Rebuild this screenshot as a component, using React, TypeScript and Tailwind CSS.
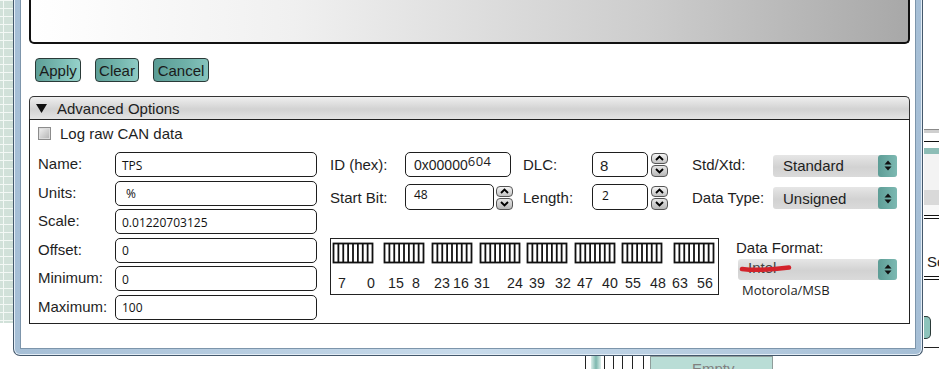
import React from "react";

function Spinner() {
  return (
    <div className="flex flex-col w-[17px] h-[24px] gap-px">
      <div className="flex-1 rounded-[4px] border border-[#555] bg-[linear-gradient(#f4f4f4,#c4c4c4)] flex items-center justify-center">
        <svg width="9" height="6" viewBox="0 0 9 6">
          <path d="M1 5 L4.5 1.5 L8 5" stroke="#000" strokeWidth="1.9" fill="none" />
        </svg>
      </div>
      <div className="flex-1 rounded-[4px] border border-[#555] bg-[linear-gradient(#e6e6e6,#b8b8b8)] flex items-center justify-center">
        <svg width="9" height="6" viewBox="0 0 9 6">
          <path d="M1 1 L4.5 4.5 L8 1" stroke="#000" strokeWidth="1.9" fill="none" />
        </svg>
      </div>
    </div>
  );
}

function SortArrows() {
  return (
    <svg width="8" height="11" viewBox="0 0 8 11">
      <polygon points="0.5,4.5 4,0.5 7.5,4.5" fill="#111" />
      <polygon points="0.5,6.5 4,10.5 7.5,6.5" fill="#111" />
    </svg>
  );
}

function Select({ value }: { value: string }) {
  return (
    <div className="flex w-[124px] h-[22px] rounded-[3px] bg-[linear-gradient(#e6e6e6,#d2d2d2_55%,#dadada)] items-center">
      <span className="flex-1 pl-[10px] text-[15px] leading-none">{value}</span>
      <div className="w-[19px] h-full rounded-[3px] bg-[linear-gradient(90deg,#5d9d96,#7db9b2)] flex items-center justify-center">
        <SortArrows />
      </div>
    </div>
  );
}

function Field({ label, value, pad }: { label: string; value: string; pad?: boolean }) {
  return (
    <div className="flex items-center h-[25px]">
      <div className="w-[77px] text-[15px] leading-none -mt-[2px]">{label}</div>
      <div
        className={
          pad
            ? "w-[202px] h-full border border-[#1e1e1e] rounded-[5px] flex items-center pl-[10px] pt-[2px] font-['Open_Sans',sans-serif] text-[12px] text-[#111]"
            : "w-[202px] h-full border border-[#1e1e1e] rounded-[5px] flex items-center pl-[6px] pt-[2px] font-['Open_Sans',sans-serif] text-[12px] text-[#111]"
        }
      >
        {value}
      </div>
    </div>
  );
}

const groups = [3, 54, 102, 150, 197, 245, 292, 344];
const labels: [string, number][] = [
  ["7", 8], ["0", 37], ["15", 58], ["8", 82], ["23", 104], ["16", 123], ["31", 144], ["24", 177],
  ["39", 199], ["32", 225], ["47", 247], ["40", 272], ["55", 295], ["48", 320], ["63", 342], ["56", 367],
];

function BitDiagram() {
  return (
    <svg width="389" height="57" viewBox="0 0 389 57" className="shrink-0">
      <rect x="0.5" y="0.5" width="388" height="56" fill="#fff" stroke="#222" strokeWidth="1" />
      {groups.map((gx) => (
        <g key={gx}>
          <rect x={gx + 0.5} y="5.5" width="39" height="19" fill="#fff" stroke="#111" strokeWidth="1.8" />
          {[1, 2, 3, 4, 5, 6, 7].map((k) => (
            <line key={k} x1={gx + 0.5 + k * 4.875} y1="5.5" x2={gx + 0.5 + k * 4.875} y2="24.5" stroke="#111" strokeWidth="1.8" />
          ))}
        </g>
      ))}
      {labels.map(([t, x]) => (
        <text key={t + x} x={x} y="49.5" fontSize="14.2" fill="#1e1e1e" fontFamily="Liberation Sans, Arial, sans-serif">
          {t}
        </text>
      ))}
    </svg>
  );
}

function Desktop() {
  return (
    <div className="absolute inset-0 flex flex-col">
      <div className="flex h-[356px]">
        <div className="w-[13px] h-[323px] bg-[#d1e1d9] bg-[repeating-linear-gradient(180deg,#f3f8f5_0px,#f3f8f5_1px,transparent_1px,transparent_8px),repeating-linear-gradient(90deg,transparent_0px,transparent_3px,#f3f8f5_3px,#f3f8f5_4px,transparent_4px,transparent_11px)]" />
        <div className="flex-1" />
        <div className="w-[15px] flex flex-col">
          <div className="h-[129px]" />
          <div className="h-[4px] bg-[#cfcfcf] border-t border-[#8a8a8a]" />
          <div className="h-[8px]" />
          <div className="h-px bg-[#111]" />
          <div className="h-[6px]" />
          <div className="h-[6px] bg-[#8dbdb6]" />
          <div className="h-[36px] bg-[#f3f3f3]" />
          <div className="h-[15px] bg-[#d9d9d9]" />
          <div className="h-[10px] bg-[#f7f7f7]" />
          <div className="h-px bg-[#111]" />
          <div className="h-[2px]" />
          <div className="h-px bg-[#111]" />
          <div className="h-[36px]" />
          <div className="h-[14px] text-[15px] leading-[14px] pl-[3px] text-[#222] overflow-hidden whitespace-nowrap">Se</div>
          <div className="h-[7px]" />
          <div className="h-px bg-[#111]" />
          <div className="h-[2px]" />
          <div className="h-px bg-[#111]" />
          <div className="h-[36px]" />
          <div className="h-[23px] w-[7px] rounded-r-[5px] border-y border-r border-[#2a3a38] bg-[#8cc3bb]" />
          <div className="h-[8px]" />
          <div className="h-px bg-[#222]" />
        </div>
      </div>
      <div className="flex h-[13px]">
        <div className="w-[585px]" />
        <div className="w-px bg-[#222]" />
        <div className="w-[5px]" />
        <div className="w-[10px] bg-[linear-gradient(90deg,#dbeeea,#7db7ae,#dbeeea)]" />
        <div className="w-[3px]" />
        <div className="w-px bg-[#222]" />
        <div className="w-[8px]" />
        <div className="w-px bg-[#222]" />
        <div className="w-[8px]" />
        <div className="w-px bg-[#222]" />
        <div className="w-[9px]" />
        <div className="w-px bg-[#222]" />
        <div className="w-[10px]" />
        <div className="w-px bg-[#222]" />
        <div className="w-[6px]" />
        <div className="w-[123px] border-x border-t border-[#8f9c9a] bg-[#b9ddd6] text-[#808080] text-[15px] leading-[15px] pl-[41px] pt-[4px] overflow-hidden">
          Empty
        </div>
      </div>
    </div>
  );
}

export default function App() {
  return (
    <div className="relative w-[939px] h-[369px] overflow-hidden bg-white font-['Liberation_Sans',Arial,sans-serif] text-[#1e1e1e]">
      <Desktop />
      <div className="absolute left-[13px] top-0 w-[910px] h-[356px] border-x border-b border-[#44586c] rounded-b-[7px] bg-[linear-gradient(90deg,#a6bfd6,#c8dbeb_50%,#a6bfd6)] px-[6px] pb-[6px] shadow-[inset_1px_0_0_#e3edf6,inset_-1px_0_0_#e3edf6,inset_0_-1px_0_#e3edf6]">
        <div className="h-full border-x border-b border-[#7d95ab] bg-white flex flex-col">
          {/* top box */}
          <div className="ml-[8px] w-[881px] h-[44px] shrink-0 border-x-2 border-b-2 border-[#111] rounded-b-[5px] bg-[linear-gradient(90deg,#ffffff,#f0f0f0_30%,#cdcdcd_70%,#a8a8a8)]" />

          {/* buttons */}
          <div className="flex ml-[14px] mt-[14px] gap-[14px] h-[24px] shrink-0">
            <button className="w-[46px] h-[24px] rounded-[4px] border border-[#2a3a38] bg-[linear-gradient(90deg,#5d9f97,#7dbdb5_60%,#96d2cb)] text-[15px] leading-none text-[#1a1a1a]">
              Apply
            </button>
            <button className="w-[44px] h-[24px] rounded-[4px] border border-[#2a3a38] bg-[linear-gradient(90deg,#5d9f97,#77b8b0_60%,#8ecbc4)] text-[15px] leading-none text-[#1a1a1a]">
              Clear
            </button>
            <button className="w-[56px] h-[24px] rounded-[4px] border border-[#2a3a38] bg-[linear-gradient(90deg,#5a9c95,#6fb1a9_60%,#86c4bd)] text-[15px] leading-none text-[#1a1a1a]">
              Cancel
            </button>
          </div>

          {/* advanced options */}
          <div className="ml-[8px] mt-[14px] w-[881px] flex flex-col shrink-0">
            <div className="h-[23px] border-t border-x border-[#333] rounded-t-[5px] bg-[linear-gradient(#efefef,#d2d2d2_55%,#e4e4e4)] flex items-center pl-[6px]">
              <svg width="11" height="9" viewBox="0 0 11 9">
                <polygon points="0,0 11,0 5.5,9" fill="#111" />
              </svg>
              <span className="ml-[10px] text-[15px] leading-none">Advanced Options</span>
            </div>
            <div className="h-[205px] border border-[#222] bg-white pl-[8px] pt-[7px] flex flex-col">
              <div className="flex items-center h-[13px]">
                <div className="w-[13px] h-[13px] border border-[#8c8c8c] bg-[linear-gradient(135deg,#f2f2f2,#b2b2b2)] shadow-[inset_0_0_0_1px_#dcdcdc]" />
                <span className="ml-[9px] text-[15px] leading-none">Log raw CAN data</span>
              </div>

              <div className="flex mt-[12px]">
                {/* left fields */}
                <div className="flex flex-col gap-[3.6px]">
                  <Field label="Name:" value="TPS" />
                  <Field label="Units:" value="%" pad />
                  <Field label="Scale:" value="0.01220703125" />
                  <Field label="Offset:" value="0" />
                  <Field label="Minimum:" value="0" />
                  <Field label="Maximum:" value="100" />
                </div>

                {/* right area */}
                <div className="ml-[13px] flex flex-col">
                  <div className="flex items-center h-[25px]">
                    <div className="w-[75px] text-[15px] leading-none">ID (hex):</div>
                    <div className="w-[118px]">
                      <div className="w-[106px] h-[25px] border border-[#1e1e1e] rounded-[5px] flex items-center pl-[8px] pt-[1px] whitespace-nowrap">
                        <span className="text-[14px] leading-none">0x00000</span>
                        <span className="font-['Open_Sans',sans-serif] text-[13px] leading-none tracking-[0.5px] -translate-y-[4px]">604</span>
                      </div>
                    </div>
                    <div className="w-[69px] text-[15px] leading-none">DLC:</div>
                    <div className="w-[100px] flex items-center">
                      <div className="w-[56px] h-[25px] border border-[#1e1e1e] rounded-[5px] flex items-center pl-[7px] pt-[2px] text-[15px] leading-none">
                        8
                      </div>
                      <div className="ml-[3px]">
                        <Spinner />
                      </div>
                    </div>
                    <div className="w-[81px] text-[15px] leading-none">Std/Xtd:</div>
                    <div className="mt-[2px]">
                      <Select value="Standard" />
                    </div>
                  </div>

                  <div className="flex items-center h-[26px] mt-[7px]">
                    <div className="w-[75px] text-[15px] leading-none">Start Bit:</div>
                    <div className="w-[118px] flex items-center">
                      <div className="w-[89px] h-[26px] border border-[#1e1e1e] rounded-[5px] flex items-center pl-[8px] pb-[4px] font-['Open_Sans',sans-serif] text-[12px] leading-none text-[#111]">
                        48
                      </div>
                      <div className="ml-[2px] mt-[1px]">
                        <Spinner />
                      </div>
                    </div>
                    <div className="w-[69px] text-[15px] leading-none">Length:</div>
                    <div className="w-[100px] flex items-center">
                      <div className="w-[56px] h-[26px] border border-[#1e1e1e] rounded-[5px] flex items-center pl-[9px] pb-[2px] font-['Open_Sans',sans-serif] text-[12px] leading-none text-[#111]">
                        2
                      </div>
                      <div className="ml-[3px] mt-[1px]">
                        <Spinner />
                      </div>
                    </div>
                    <div className="w-[81px] text-[15px] leading-none">Data Type:</div>
                    <div className="mt-[2px]">
                      <Select value="Unsigned" />
                    </div>
                  </div>

                  <div className="flex mt-[28px]">
                    <BitDiagram />
                    <div className="ml-[17px] flex flex-col pt-[1px]">
                      <div className="text-[15px] leading-[17px]">Data Format:</div>
                      <div className="relative ml-[2px] mt-[3px] flex w-[159px] h-[21px] rounded-[3px] bg-[linear-gradient(#e6e6e6,#d2d2d2_55%,#dadada)]">
                        <span className="flex-1 pl-[10px] pt-[1px] text-[15px] leading-none text-[#444]">Intel</span>
                        <div className="w-[19px] h-full rounded-[3px] bg-[linear-gradient(90deg,#5d9d96,#7db9b2)] flex items-center justify-center">
                          <SortArrows />
                        </div>
                        <svg className="absolute left-[1px] top-[4px]" width="54" height="10" viewBox="0 0 54 10">
                          <path d="M3 6 C 15 7.5, 35 6.5, 50 4.5" stroke="#d3232b" strokeWidth="4.5" strokeLinecap="round" fill="none" />
                        </svg>
                      </div>
                      <div className="ml-[6px] mt-[2px] font-['Open_Sans',sans-serif] text-[13px] leading-[17px] text-[#1e1e1e]">
                        Motorola/MSB
                      </div>
                    </div>
                  </div>
                </div>
              </div>
            </div>
          </div>
        </div>
      </div>
    </div>
  );
}
